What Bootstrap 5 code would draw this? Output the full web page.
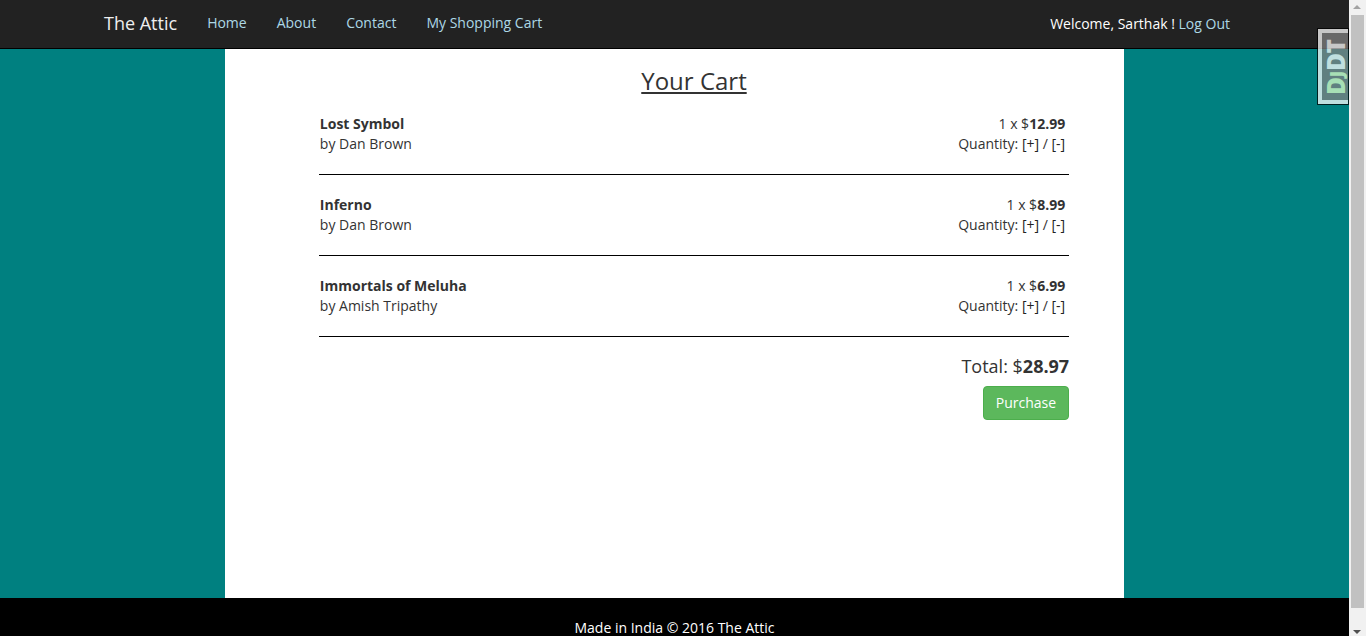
<!DOCTYPE html>
<html lang="en">
<head>
<meta charset="utf-8">
<meta name="viewport" content="width=device-width, initial-scale=1">
<title>The Attic - Your Cart</title>
<link href="https://cdn.jsdelivr.net/npm/bootstrap@5.3.0/dist/css/bootstrap.min.css" rel="stylesheet">
<style>
  body { font-family: "Open Sans", sans-serif; font-size: 14px; line-height: 20px; color: #333; }
  a { text-decoration: none; }
  .page { background: teal; }
  .site-nav { background: #222; border-bottom: 1px solid #000; --bs-navbar-padding-y: 0; --bs-navbar-nav-link-padding-x: 15px; }
  .site-nav .navbar-brand { font-size: 18px; line-height: 20px; color: #eee; padding: 13px 15px 15px; margin: 0; }
  .site-nav .nav-link { color: lightblue; padding-top: 13px; padding-bottom: 15px; }
  .nav-inner { padding: 0 90px 0 89px; }
  .welcome { color: #fff; padding-right: 29px; }
  .welcome a { color: lightblue; }
  .sheet { background: #fff; padding: 17px 55px 0 94px; font-weight: 400; }
  .sheet h1 { font-size: 24px; line-height: 30px; font-weight: 400; margin-bottom: 18px; }
  .sheet strong { font-weight: 700; }
  .cart-line { border-bottom: 1px solid #000; padding: 0 4px 20px 1px; margin-bottom: 20px; }
  .cart-line:last-child { margin-bottom: 19px; }
  .cart-line a { color: #222; }
  .total { font-size: 18px; line-height: 20px; margin-bottom: 10px; }
  .purchase { --bs-btn-color: #fff; --bs-btn-bg: #5cb85c; --bs-btn-border-color: #4cae4c; --bs-btn-hover-color: #fff; --bs-btn-hover-bg: #449d44; --bs-btn-font-size: 14px; --bs-btn-line-height: 20px; --bs-btn-border-radius: 4px; }
  .site-footer { background: #000; color: #fff; padding-top: 20px; height: 38px; }
  .scroll-rail { width: 17px; background: #f1f1f1; padding-bottom: 28px; }
  .scroll-rail svg { height: 15px; }
  .scroll-thumb { background: #c1c1c1; width: 13px; }
  .debug-tab { top: 28px; right: 17px; width: 32px; height: 77px; opacity: .75; background: #808080; border: 1px solid #000; box-shadow: inset 4px 4px 0 #fff, inset 0 -4px 0 #fff; padding: 0 2px 0 8px; }
  .debug-tab span { writing-mode: vertical-rl; transform: rotate(180deg); font: 800 24px/20px "Open Sans", sans-serif; color: #fff; }
  .debug-tab b { color: #dfffc7; font-weight: 800; }
  .debug-tab small { font-size: 18px; }
</style>
</head>
<body>
<div class="d-flex vh-100 overflow-hidden">
  <div class="page flex-grow-1 d-flex flex-column">
    <nav class="navbar navbar-expand site-nav">
      <div class="container-fluid nav-inner">
        <a class="navbar-brand" href="#">The Attic</a>
        <ul class="navbar-nav me-auto">
          <li class="nav-item"><a class="nav-link" href="#">Home</a></li>
          <li class="nav-item"><a class="nav-link" href="#">About</a></li>
          <li class="nav-item"><a class="nav-link" href="#">Contact</a></li>
          <li class="nav-item"><a class="nav-link" href="#">My Shopping Cart</a></li>
        </ul>
        <div class="welcome">Welcome, Sarthak ! <a href="#">Log Out</a></div>
      </div>
    </nav>
    <div class="row g-0 flex-grow-1">
      <main class="col-8 offset-2 sheet">
        <h1 class="text-center text-decoration-underline">Your Cart</h1>
        <ul class="list-unstyled mb-0">
          <li class="cart-line d-flex justify-content-between">
            <div><strong>Lost Symbol</strong><br>by Dan Brown</div>
            <div class="text-end">1 x $<strong>12.99</strong><br>Quantity: <a href="#">[+]</a> / <a href="#">[-]</a></div>
          </li>
          <li class="cart-line d-flex justify-content-between">
            <div><strong>Inferno</strong><br>by Dan Brown</div>
            <div class="text-end">1 x $<strong>8.99</strong><br>Quantity: <a href="#">[+]</a> / <a href="#">[-]</a></div>
          </li>
          <li class="cart-line d-flex justify-content-between">
            <div><strong>Immortals of Meluha</strong><br>by Amish Tripathy</div>
            <div class="text-end">1 x $<strong>6.99</strong><br>Quantity: <a href="#">[+]</a> / <a href="#">[-]</a></div>
          </li>
        </ul>
        <div class="text-end">
          <p class="total">Total: $<strong>28.97</strong></p>
          <button type="button" class="btn purchase">Purchase</button>
        </div>
      </main>
    </div>
    <footer class="site-footer text-center">Made in India © 2016 The Attic</footer>
  </div>
  <div class="scroll-rail d-flex flex-column align-items-center position-relative" aria-hidden="true">
    <svg width="17" height="15" viewBox="0 0 17 15"><path d="M4 9h8L8 5z" fill="#a3a3a3"/></svg>
    <div class="scroll-thumb flex-grow-1"></div>
    <svg class="position-absolute bottom-0" width="17" height="15" viewBox="0 0 17 15"><path d="M4 9h8l-4 4z" fill="#505050"/></svg>
  </div>
</div>
<button type="button" class="debug-tab position-absolute d-flex align-items-center justify-content-center"><span><b>D<small>J</small></b>DT</span></button>
<script src="https://cdn.jsdelivr.net/npm/bootstrap@5.3.0/dist/js/bootstrap.bundle.min.js"></script>
</body>
</html>
